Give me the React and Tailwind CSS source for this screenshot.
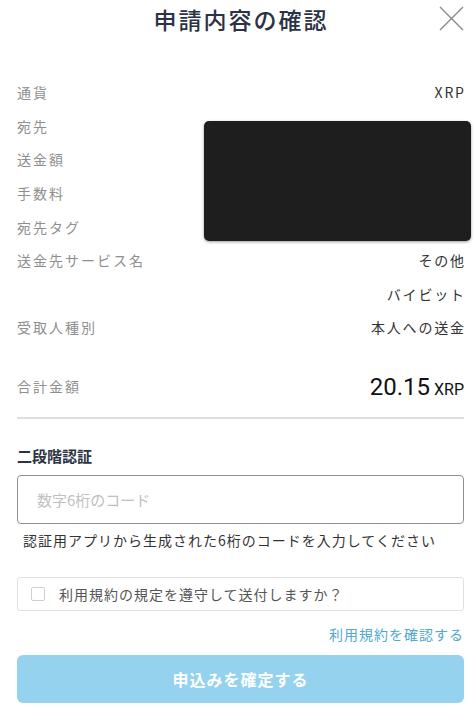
import { useState } from "react";

const rows = [
    { label: "通貨", value: "XRP" },
    { label: "宛先", value: "" },
    { label: "送金額", value: "" },
    { label: "手数料", value: "" },
    { label: "宛先タグ", value: "" },
    { label: "送金先サービス名", value: "その他" },
    { label: "", value: "バイビット" },
    { label: "受取人種別", value: "本人への送金" },
];

const App = () => {
    const [agree, setAgree] = useState(false);
    const [code, setCode] = useState("");

    return (
        <div className="w-[475px] h-[714px] overflow-hidden bg-white text-[#333] font-['Noto_Sans_CJK_JP','Noto_Sans',sans-serif]">
            {/* header */}
            <div className="relative h-[38px] flex items-center justify-center pl-[7px]">
                <h1 className="text-[23px] font-medium text-[#2b3243] tracking-[2px]">申請内容の確認</h1>
                <button className="absolute right-[11px] top-[6px] w-[25px] h-[25px]">
                    <svg viewBox="0 0 25 25" className="w-[25px] h-[25px]" fill="none" stroke="#8a8a8a" strokeWidth="1.4">
                        <path d="M1 1 L24 24 M24 1 L1 24" />
                    </svg>
                </button>
            </div>

            <div className="pl-[17px] pr-[11px]">
                {/* detail list */}
                <div className="relative mt-[38px]">
                    {rows.map((r, i) => (
                        <div key={i} className="h-[33.6px] flex items-center justify-between text-[14px]">
                            <span className="text-[#8f8f8f] tracking-[2px]">{r.label}</span>
                            <span className="text-[#333] tracking-[1.8px] -mr-[1.8px]">{r.value}</span>
                        </div>
                    ))}
                    {/* redacted area */}
                    <div className="absolute left-[187px] top-[45px] w-[267px] h-[120px] rounded-[5px] bg-[#1e1e1e] shadow-[0_1px_3px_rgba(0,0,0,0.4)]" />
                </div>

                {/* total */}
                <div className="mt-[22px] h-[40px] flex items-center justify-between">
                    <span className="text-[14px] text-[#8f8f8f] tracking-[2px]">合計金額</span>
                    <span className="flex items-baseline text-[#111]">
                        <span className="text-[24px] font-['Roboto',sans-serif]">20.15</span>
                        <span className="ml-[4px] text-[16px] font-['Roboto',sans-serif]">XRP</span>
                    </span>
                </div>
                <div className="mt-[10px] h-[2px] bg-[#dedede]" />

                {/* 2fa */}
                <h2 className="mt-[26px] text-[15px] font-bold text-[#2b3243]">二段階認証</h2>
                <input
                    value={code}
                    onChange={(e) => setCode(e.target.value)}
                    placeholder="数字6桁のコード"
                    className="mt-[8px] w-full h-[49px] px-[19px] border border-[#8d9196] rounded-[4px] text-[15px] outline-none placeholder:text-[#c0c0c0]"
                />
                <p className="mt-[6px] ml-[6px] text-[14px] text-[#333] tracking-[1px] whitespace-nowrap">認証用アプリから生成された6桁のコードを入力してください</p>

                {/* terms */}
                <label className="mt-[26px] h-[34px] flex items-center border border-[#e0e0e0] rounded-[3px] px-[13px] cursor-pointer">
                    <input
                        type="checkbox"
                        checked={agree}
                        onChange={() => setAgree(!agree)}
                        className="appearance-none w-[14px] h-[14px] border border-[#d0d0d0] rounded-[2px] checked:bg-[#93d1ee]"
                    />
                    <span className="ml-[14px] text-[14px] text-[#555] tracking-[1px]">利用規約の規定を遵守して送付しますか？</span>
                </label>
                <div className="mt-[10px] text-right">
                    <a className="text-[14px] text-[#4fa8cf] tracking-[1px]">利用規約を確認する</a>
                </div>

                <button className="mt-[10px] w-full h-[48px] rounded-[6px] bg-[#94d2ee] text-white text-[16px] font-bold tracking-[1px]">
                    申込みを確定する
                </button>
            </div>
        </div>
    );
};

export default App;
